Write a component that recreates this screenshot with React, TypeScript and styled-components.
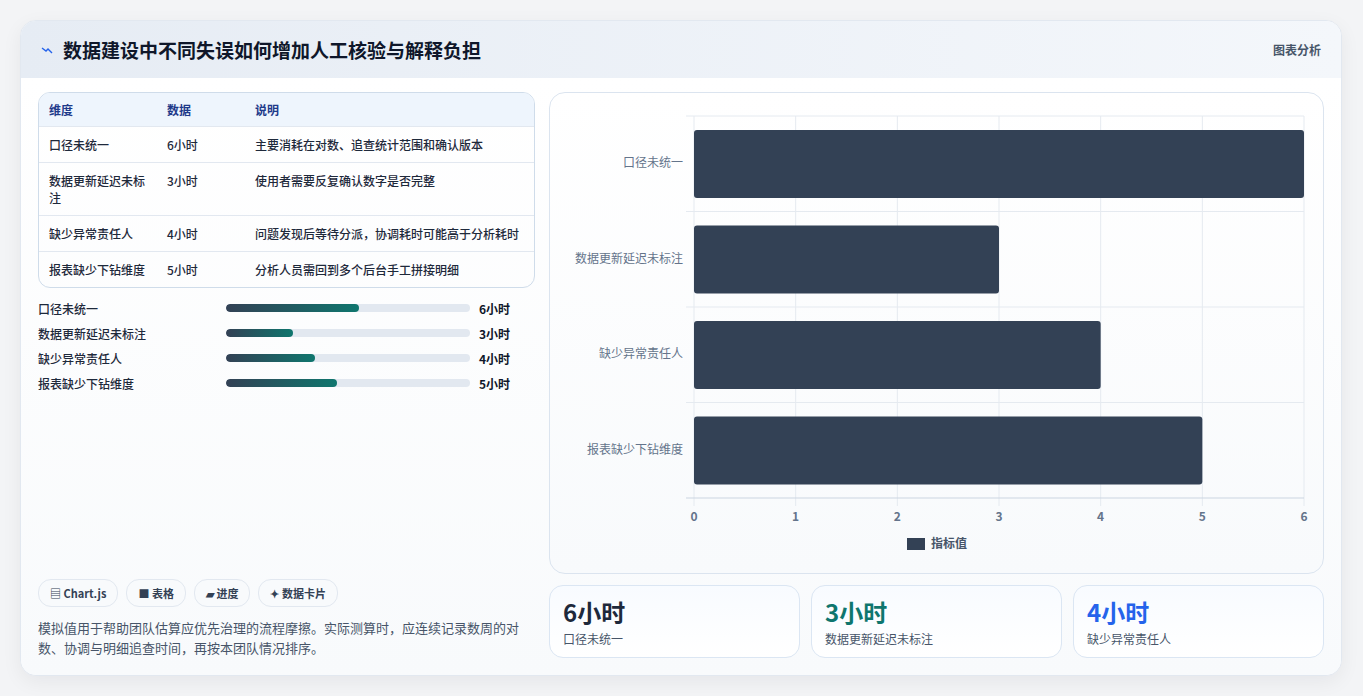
import React from 'react';
import styled, { createGlobalStyle } from 'styled-components';

const GlobalStyle = createGlobalStyle`
  html, body { margin: 0; padding: 0; background: #f3f4f6; }
  body { font-family: "Noto Sans CJK SC", "Noto Sans", sans-serif; color: #1e293b; }
`;

const Page = styled.div`
  padding: 20px 21px 20px 20px;
`;

const Card = styled.div`
  height: 656px;
  box-sizing: border-box;
  background: #ffffff;
  border: 1px solid #e2e8f0;
  border-radius: 16px;
  box-shadow: 0 6px 20px rgba(15, 23, 42, 0.06);
  overflow: hidden;
  display: flex;
  flex-direction: column;
`;

const Header = styled.div`
  height: 57px;
  flex-shrink: 0;
  display: flex;
  align-items: center;
  justify-content: space-between;
  padding: 0 20px 0 20px;
  background: linear-gradient(90deg, #e6ecf4, #f4f7fb);
`;

const Title = styled.h1`
  margin: 0;
  font-size: 19px;
  font-weight: 700;
  color: #0f172a;
  display: flex;
  align-items: center;
  gap: 10px;
`;

const HeaderTag = styled.span`
  font-size: 12px;
  font-weight: 600;
  color: #475569;
`;

const Body = styled.div`
  flex: 1;
  display: grid;
  grid-template-columns: 497px 775px;
  gap: 14px;
  padding: 14px 17px 18px 17px;
  background: linear-gradient(180deg, #ffffff, #f8fafc);
`;

const LeftCol = styled.div`
  display: flex;
  flex-direction: column;
`;

const TableWrap = styled.div`
  border: 1px solid #cfdcea;
  border-radius: 12px;
  overflow: hidden;
`;

const Table = styled.table`
  width: 100%;
  border-collapse: collapse;
  font-size: 12px;
  th {
    background: #eef5fd;
    color: #1e3a8a;
    font-weight: 700;
    text-align: left;
    height: 33px;
    padding: 0 10px;
  }
  td {
    color: #1e293b;
    font-weight: 500;
    padding: 9px 10px;
    vertical-align: top;
    border-top: 1px solid #e2e8f0;
    line-height: 17px;
  }
`;

const Progress = styled.div`
  margin-top: 11px;
  display: flex;
  flex-direction: column;
  gap: 7px;
`;

const ProgRow = styled.div`
  display: grid;
  grid-template-columns: 179px 244px 1fr;
  gap: 9px;
  align-items: center;
  font-size: 12px;
  height: 18px;
`;

const ProgLabel = styled.span`
  color: #1e293b;
  font-weight: 500;
`;

const Track = styled.div`
  height: 8px;
  border-radius: 4px;
  background: #e2e8f0;
  overflow: hidden;
`;

const Fill = styled.div`
  height: 100%;
  border-radius: 4px;
  background: linear-gradient(90deg, #334155, #0f766e);
`;

const ProgValue = styled.span`
  font-weight: 700;
  color: #0f172a;
`;

const Spacer = styled.div`
  flex: 1;
`;

const Chips = styled.div`
  display: flex;
  gap: 8px;
`;

const Chip = styled.span`
  height: 26px;
  padding: 0 11px;
  border: 1px solid #e2e8f0;
  border-radius: 13px;
  background: #f8fafc;
  font-size: 11px;
  font-weight: 700;
  color: #334155;
  display: flex;
  align-items: center;
  gap: 3px;
`;

const Note = styled.p`
  margin: 11px 0 0;
  font-size: 13px;
  line-height: 20px;
  color: #475569;
`;

const RightCol = styled.div`
  display: flex;
  flex-direction: column;
  gap: 11px;
`;

const ChartCard = styled.div`
  height: 480px;
  border: 1px solid #dbe4ef;
  border-radius: 16px;
  background: linear-gradient(180deg, #ffffff, #f8fafc);
  overflow: hidden;
`;

const Stats = styled.div`
  display: grid;
  grid-template-columns: repeat(3, 1fr);
  gap: 11px;
`;

const Stat = styled.div`
  height: 73px;
  box-sizing: border-box;
  border: 1px solid #dbe6f3;
  border-radius: 14px;
  background: linear-gradient(180deg, #f8fbff, #ffffff);
  padding: 10px 13px;
`;

const StatValue = styled.div<{ $color: string }>`
  font-size: 24px;
  font-weight: 700;
  line-height: 32px;
  color: ${p => p.$color};
`;

const StatLabel = styled.div`
  font-size: 12px;
  color: #475569;
  margin-top: 2px;
`;

const rows = [
  { name: '口径未统一', v: 6, desc: '主要消耗在对数、追查统计范围和确认版本' },
  { name: '数据更新延迟未标注', v: 3, desc: '使用者需要反复确认数字是否完整' },
  { name: '缺少异常责任人', v: 4, desc: '问题发现后等待分派，协调耗时可能高于分析耗时' },
  { name: '报表缺少下钻维度', v: 5, desc: '分析人员需回到多个后台手工拼接明细' },
];

const Chart = () => {
  const x0 = 144, unit = (754 - 144) / 6, top = 23, band = 95.5;
  return (
    <svg width="775" height="480" style={{ display: 'block' }}>
      {[0, 1, 2, 3, 4, 5, 6].map(i => (
        <line key={i} x1={x0 + i * unit} x2={x0 + i * unit} y1={top} y2={413} stroke="#e5eaf0" />
      ))}
      {[0, 1, 2, 3].map(i => (
        <line key={i} x1={136} x2={754} y1={top + i * band} y2={top + i * band} stroke="#e5eaf0" />
      ))}
      <line x1={136} x2={754} y1={405} y2={405} stroke="#cbd5e1" />
      {rows.map((r, i) => (
        <g key={r.name}>
          <rect x={x0} y={top + i * band + 14} width={r.v * unit} height={68} rx={3} fill="#334155" />
          <text x={133} y={top + i * band + 51} textAnchor="end" fontSize="12" fill="#64748b">{r.name}</text>
        </g>
      ))}
      {[0, 1, 2, 3, 4, 5, 6].map(i => (
        <text key={i} x={x0 + i * unit} y={428} textAnchor="middle" fontSize="12" fontWeight="600" fill="#64748b">{i}</text>
      ))}
      <rect x={357} y={445} width={18} height={12} fill="#334155" />
      <text x={381} y={455} fontSize="12" fontWeight="600" fill="#475569">指标值</text>
    </svg>
  );
};

const stats = [
  { v: '6小时', l: '口径未统一', c: '#1e293b' },
  { v: '3小时', l: '数据更新延迟未标注', c: '#0f766e' },
  { v: '4小时', l: '缺少异常责任人', c: '#2563eb' },
];

export default function App() {
  return (
    <Page>
      <GlobalStyle />
      <Card>
        <Header>
          <Title>
            <svg width="12" height="8" viewBox="0 0 12 8">
              <path d="M1 2 L5 5 L7 3 L11 7" fill="none" stroke="#2563eb" strokeWidth="1.4" />
            </svg>
            数据建设中不同失误如何增加人工核验与解释负担
          </Title>
          <HeaderTag>图表分析</HeaderTag>
        </Header>
        <Body>
          <LeftCol>
            <TableWrap>
              <Table>
                <thead>
                  <tr>
                    <th style={{ width: 98 }}>维度</th>
                    <th style={{ width: 68 }}>数据</th>
                    <th>说明</th>
                  </tr>
                </thead>
                <tbody>
                  {rows.map(r => (
                    <tr key={r.name}>
                      <td>{r.name}</td>
                      <td>{r.v}小时</td>
                      <td>{r.desc}</td>
                    </tr>
                  ))}
                </tbody>
              </Table>
            </TableWrap>
            <Progress>
              {rows.map(r => (
                <ProgRow key={r.name}>
                  <ProgLabel>{r.name}</ProgLabel>
                  <Track><Fill style={{ width: `${(r.v / 11) * 100}%` }} /></Track>
                  <ProgValue>{r.v}小时</ProgValue>
                </ProgRow>
              ))}
            </Progress>
            <Spacer />
            <Chips>
              <Chip>▤ Chart.js</Chip>
              <Chip>■ 表格</Chip>
              <Chip>▰ 进度</Chip>
              <Chip>✦ 数据卡片</Chip>
            </Chips>
            <Note>模拟值用于帮助团队估算应优先治理的流程摩擦。实际测算时，应连续记录数周的对数、协调与明细追查时间，再按本团队情况排序。</Note>
          </LeftCol>
          <RightCol>
            <ChartCard><Chart /></ChartCard>
            <Stats>
              {stats.map(s => (
                <Stat key={s.l}>
                  <StatValue $color={s.c}>{s.v}</StatValue>
                  <StatLabel>{s.l}</StatLabel>
                </Stat>
              ))}
            </Stats>
          </RightCol>
        </Body>
      </Card>
    </Page>
  );
}
